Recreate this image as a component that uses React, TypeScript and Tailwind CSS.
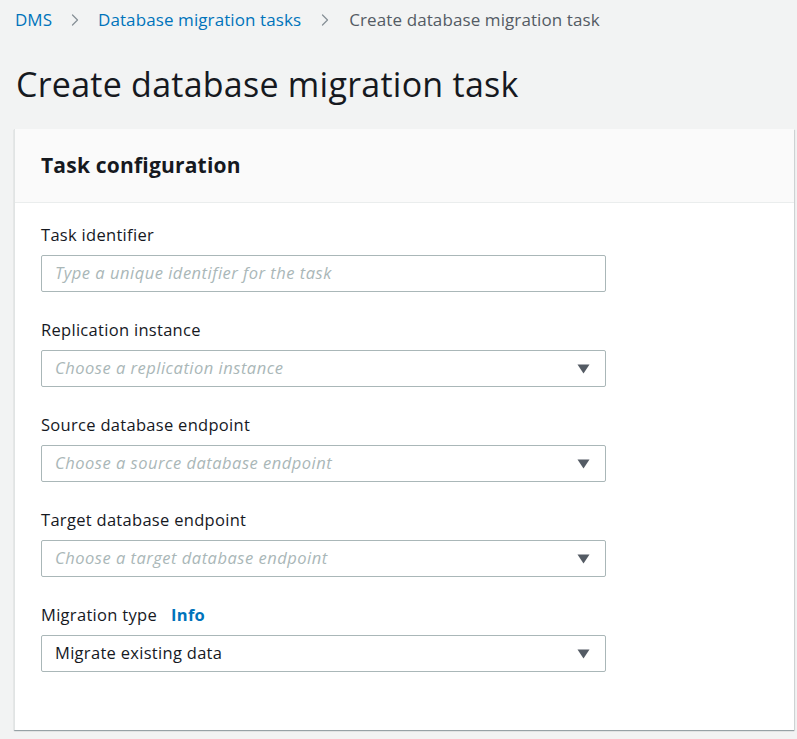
import { ChevronRight } from "lucide-react";

const Caret = () => (
  <svg width="13" height="10" viewBox="0 0 13 10" className="shrink-0">
    <path d="M0.5 0.5 H12.5 L6.5 9.5 Z" fill="#545b64" />
  </svg>
);

const Field = ({
  label,
  placeholder,
  value,
  select = false,
  info = false,
}: {
  label: string;
  placeholder?: string;
  value?: string;
  select?: boolean;
  info?: boolean;
}) => (
  <div className="flex flex-col">
    <div className="flex items-center gap-[14px] h-[22px] text-[16.5px] tracking-[0.3px] text-[#16191f]">
      <span>{label}</span>
      {info && <span className="font-bold text-[#0073bb]">Info</span>}
    </div>
    <div className="mt-[9px] w-[565px] h-[37px] border border-[#aab7b8] rounded-[2px] bg-white flex items-center justify-between pl-[13px] pr-[15px]">
      {value ? (
        <span className="text-[16.5px] tracking-[0.3px] text-[#16191f]">{value}</span>
      ) : (
        <span className="text-[16.5px] tracking-[0.5px] italic text-[#aab7b8]">{placeholder}</span>
      )}
      {select && <Caret />}
    </div>
  </div>
);

export default function App() {
  return (
    <div
      className="min-h-[739px] bg-[#f2f3f3] text-[#16191f]"
      style={{ fontFamily: "'Open Sans', 'Liberation Sans', sans-serif" }}
    >
      <nav className="h-[40px] pl-[15px] flex items-center text-[17px]">
        <span className="text-[#0073bb]">DMS</span>
        <ChevronRight className="mx-[13px] text-[#879196]" size={20} strokeWidth={1.5} />
        <span className="text-[#0073bb] tracking-[0.1px]">Database migration tasks</span>
        <ChevronRight className="mx-[14px] text-[#879196]" size={20} strokeWidth={1.5} />
        <span className="text-[#545b64] tracking-[0.1px]">Create database migration task</span>
      </nav>

      <h1 className="mt-[24px] pl-[16px] h-[40px] leading-[40px] text-[34px] tracking-[0.25px] font-normal text-[#16191f]">
        Create database migration task
      </h1>

      <div className="mt-[25px] ml-[14px] mr-[3px] bg-white border-l border-[#e1e4e4] shadow-[0_1px_1px_0_rgba(0,28,36,0.3),1px_1px_1px_0_rgba(0,28,36,0.1)]">
        <div className="h-[74px] bg-[#fafafa] border-b border-[#eaeded] flex items-center pl-[26px]">
          <h2 className="text-[21px] tracking-[0.2px] font-bold text-[#16191f]">Task configuration</h2>
        </div>
        <div className="pl-[26px] pt-[21px] pb-[58px] flex flex-col gap-[27px]">
          <Field label="Task identifier" placeholder="Type a unique identifier for the task" />
          <Field label="Replication instance" placeholder="Choose a replication instance" select />
          <Field label="Source database endpoint" placeholder="Choose a source database endpoint" select />
          <Field label="Target database endpoint" placeholder="Choose a target database endpoint" select />
          <Field label="Migration type" value="Migrate existing data" select info />
        </div>
      </div>
    </div>
  );
}
